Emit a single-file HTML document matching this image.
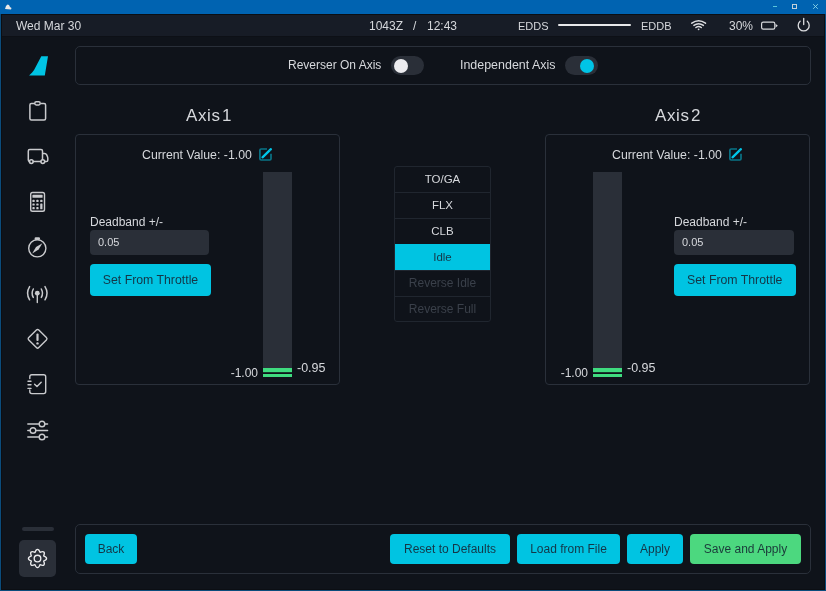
<!DOCTYPE html>
<html><head><meta charset="utf-8">
<style>
*{box-sizing:border-box;margin:0;padding:0}
html,body{width:826px;height:591px;overflow:hidden;background:#0b4c7c}
body{position:relative;font-family:"Liberation Sans",sans-serif;color:#d6d8dc;font-size:12px}
.a{position:absolute}
.t{position:absolute;white-space:pre;line-height:14px;will-change:transform}
#win{left:1px;top:14px;width:824px;height:576px;background:#0b0e13}
#status{left:2px;top:15px;width:822px;height:21px;background:#171c26;border-bottom:1px solid #0d1016;height:22px}
#body{left:2px;top:37px;width:822px;height:552px;background:#0f131a}
.panel{position:absolute;border:1.5px solid #2a303a;border-radius:5px}
.ap{border-radius:4px}
.btn{position:absolute;will-change:transform;background:#00c4e2;border-radius:4px;color:#143647;text-align:center;font-size:12px}
.ico{position:absolute;overflow:visible}
.row{position:absolute;will-change:transform;left:0;width:95px;height:26px;text-align:center;line-height:25px;border-top:1px solid #20262f;font-size:11.5px}
</style></head><body>
<!-- title bar -->
<div class="a" style="left:0;top:0;width:826px;height:14px;background:#0063b1"></div>
<svg class="a" style="left:4px;top:3px" width="8" height="7" viewBox="0 0 8 7"><path d="M1 6 L2 3 L3.5 1.5 L5 2 L6 4 L7.5 5 L7 6.5 Z" fill="#e8e8e8"/></svg>
<div class="a" style="left:773px;top:6px;width:4px;height:1px;background:#58c6dc"></div>
<div class="a" style="left:792px;top:4px;width:5px;height:5px;border:1px solid #c4d0d8"></div>
<svg class="a" style="left:812px;top:3px" width="7" height="7" viewBox="0 0 7 7"><path d="M1.2 1.2 L5.8 5.8 M5.8 1.2 L1.2 5.8" stroke="#8fd8e8" stroke-width="0.9"/></svg>

<div id="win" class="a"></div>
<div id="status" class="a"></div>
<div id="body" class="a"></div>

<!-- status bar -->
<div class="t" style="left:16px;top:19px">Wed Mar 30</div>
<div class="t" style="left:369px;top:19px">1043Z</div>
<div class="t" style="left:413px;top:19px">/</div>
<div class="t" style="left:427px;top:19px">12:43</div>
<div class="t" style="left:518px;top:19px;font-size:11px">EDDS</div>
<div class="a" style="left:558px;top:24px;width:73px;height:2px;background:#e8e8ea;border-radius:1px"></div>
<div class="t" style="left:641px;top:19px;font-size:11px">EDDB</div>
<svg class="a" style="left:0;top:0" width="826" height="591" viewBox="0 0 826 591">
 <g fill="none" stroke="#dcdde0" stroke-width="1.5" stroke-linecap="round">
  <path d="M691.8 23.2 Q698.6 18.2 705.5 23.2"/>
  <path d="M693.9 25.4 Q698.6 22 703.4 25.4"/>
  <path d="M695.9 27.5 Q698.6 25.6 701.3 27.5"/>
 </g>
 <circle cx="698.6" cy="29.3" r="0.9" fill="#dcdde0"/>
 <rect x="761.6" y="22.2" width="13.2" height="7" rx="1.6" fill="none" stroke="#d8d9dc" stroke-width="1.2"/>
 <path d="M775.6 23.8 L777.8 25.7 L775.6 27.6 Z" fill="#d8d9dc"/>
 <path d="M800.1 21.3 A5.5 5.5 0 1 0 807.3 21.3" fill="none" stroke="#dcdde0" stroke-width="1.3" stroke-linecap="round"/>
 <path d="M803.7 18.5 V24.6" stroke="#dcdde0" stroke-width="1.3" stroke-linecap="round"/>
</svg>
<div class="t" style="left:729px;top:19px">30%</div>



<!-- sidebar -->
<div class="a" style="left:22px;top:527px;width:32px;height:3.5px;border-radius:2px;background:#2a2f38"></div>
<div class="a" style="left:19px;top:540px;width:37px;height:37px;border-radius:5px;background:#2a2f38"></div>
<svg class="a" style="left:0;top:0" width="826" height="591" viewBox="0 0 826 591">
 <path d="M41.3 56.3 H48 L44.8 75.6 H29.1 C31.3 73.6 32.8 72 34.2 69.8 Z" fill="#00c4e4"/>
 <g fill="none" stroke="#c9cacd" stroke-width="1.5" stroke-linecap="round" stroke-linejoin="round">
  <!-- clipboard -->
  <path d="M34.3 103.5 H31.4 Q29.9 103.5 29.9 105 V118.5 Q29.9 120 31.4 120 H44.1 Q45.6 120 45.6 118.5 V105 Q45.6 103.5 44.1 103.5 H41.2"/>
  <rect x="34.8" y="101.8" width="5.4" height="3.2" rx="1.4"/>
  <!-- truck -->
  <path d="M29.6 161.6 Q28.3 161.4 28.3 160 V151 Q28.3 149.5 29.8 149.5 H41 Q42.5 149.5 42.5 151 V159.6 M42.5 153.4 H44.6 Q46 153.4 46.7 154.9 L47.5 156.8 Q47.8 157.6 47.8 158.6 V160.2 Q47.8 161.6 46.4 161.6 H44.8 M40.8 161.6 H33.3"/>
  <circle cx="31.3" cy="161.6" r="1.9"/>
  <circle cx="42.8" cy="161.6" r="1.9"/>
  <!-- calculator -->
  <rect x="30.7" y="192.5" width="13.8" height="18.8" rx="1.8" stroke-width="1.4"/>
  <!-- compass -->
  <circle cx="37.3" cy="248.3" r="8.6" stroke-width="1.4"/>
  <!-- broadcast -->
  <path d="M29.6 286.6 Q25.5 293.2 29.6 299.8 M45 286.6 Q49.1 293.2 45 299.8 M33.3 289 Q30.9 293.2 33.3 297.4 M41.3 289 Q43.7 293.2 41.3 297.4" stroke-width="1.5"/>
  <path d="M37.3 295 V302.6" stroke-width="1.4"/>
  <!-- diamond -->
  <path d="M36.4 330 Q37.6 328.8 38.8 330 L46.4 337.6 Q47.6 338.8 46.4 340 L38.8 347.6 Q37.6 348.8 36.4 347.6 L28.8 340 Q27.6 338.8 28.8 337.6 Z" stroke-width="1.4"/>
  <!-- journal -->
  <path d="M29.8 378.5 V376.8 Q29.8 374.8 31.8 374.8 H43.7 Q45.7 374.8 45.7 376.8 V391.6 Q45.7 393.6 43.7 393.6 H31.8 Q29.8 393.6 29.8 391.6 V390" stroke-width="1.4"/>
  <path d="M28 381.2 H31 M28 384.8 H31 M28 388.4 H31" stroke-width="1.4"/>
  <path d="M34.6 384.2 L37 386.6 L41.2 382.2" stroke-width="1.4"/>
  <!-- sliders -->
  <path d="M27.8 424 H39.2 M44.8 424 H47.6 M27.8 430.5 H30.2 M35.8 430.5 H47.6 M27.8 437 H39.2 M44.8 437 H47.6" stroke-width="1.4"/>
  <circle cx="42" cy="424" r="2.8" stroke-width="1.4"/>
  <circle cx="33" cy="430.5" r="2.8" stroke-width="1.4"/>
  <circle cx="42" cy="437" r="2.8" stroke-width="1.4"/>
 </g>
 <g fill="#c9cacd">
  <rect x="34.6" y="237.3" width="5.4" height="2.6" rx="1.2"/>
  <path d="M42.4 243.2 L38.6 249.6 L32.2 253.4 L36 247 Z"/>
  <circle cx="37.3" cy="293.2" r="2.4"/>
  <rect x="36.4" y="333.6" width="2.2" height="7.4" rx="1"/>
  <circle cx="37.5" cy="343.4" r="1.2"/>
  <rect x="32.4" y="194.8" width="10.2" height="3" rx="0.6"/>
  <rect x="32.4" y="199.8" width="2.3" height="2.2" rx="0.6"/>
  <rect x="36.3" y="199.8" width="2.3" height="2.2" rx="0.6"/>
  <rect x="40.2" y="199.8" width="2.3" height="2.2" rx="0.6"/>
  <rect x="32.4" y="203.4" width="2.3" height="2.2" rx="0.6"/>
  <rect x="36.3" y="203.4" width="2.3" height="2.2" rx="0.6"/>
  <rect x="40.2" y="203.4" width="2.3" height="5.9" rx="0.6"/>
  <rect x="32.4" y="207.1" width="2.3" height="2.2" rx="0.6"/>
  <rect x="36.3" y="207.1" width="2.3" height="2.2" rx="0.6"/>
 </g>
 <g fill="none" stroke="#ececee" stroke-width="1.35" stroke-linejoin="round">
  <path d="M34.97 552.40 C36.36 548.46 38.64 548.46 40.03 552.40 C43.79 550.60 45.40 552.21 43.60 555.97 C47.54 557.36 47.54 559.64 43.60 561.03 C45.40 564.79 43.79 566.40 40.03 564.60 C38.64 568.54 36.36 568.54 34.97 564.60 C31.21 566.40 29.60 564.79 31.40 561.03 C27.46 559.64 27.46 557.36 31.40 555.97 C29.60 552.21 31.21 550.60 34.97 552.40 Z"/>
  <circle cx="37.5" cy="558.5" r="3.3"/>
 </g>
</svg>

<!-- top toggle panel -->
<div class="panel" style="left:75px;top:46px;width:736px;height:39px"></div>
<div class="t" style="left:288px;top:58px">Reverser On Axis</div>
<div class="a" style="left:391px;top:56px;width:33px;height:19px;border-radius:10px;background:#2a2f38"></div>
<div class="a" style="left:394px;top:58.5px;width:14px;height:14px;border-radius:7px;background:#ececef"></div>
<div class="t" style="left:460px;top:58px;font-size:12.45px">Independent Axis</div>
<div class="a" style="left:565px;top:56px;width:33px;height:19px;border-radius:10px;background:#2a2f38"></div>
<div class="a" style="left:580px;top:58.5px;width:14px;height:14px;border-radius:7px;background:#00c4e6"></div>

<!-- axis titles -->
<div class="t" style="left:185.5px;top:106.5px;font-size:17px;line-height:18px;letter-spacing:0.6px">Axis</div>
<div class="t" style="left:222px;top:106.5px;font-size:17px;line-height:18px">1</div>
<div class="t" style="left:654.5px;top:106.5px;font-size:17px;line-height:18px;letter-spacing:0.6px">Axis</div>
<div class="t" style="left:691px;top:106.5px;font-size:17px;line-height:18px">2</div>

<!-- axis panels -->
<div class="panel ap" style="left:75px;top:134px;width:265px;height:250.5px"></div>
<div class="panel ap" style="left:545px;top:134px;width:265px;height:250.5px"></div>

<!-- axis 1 content -->
<div class="t" style="left:142px;top:148px;font-size:12.3px">Current Value: -1.00</div>
<svg class="a" style="left:258px;top:147px" width="16" height="16" viewBox="0 0 16 16">
 <path d="M9 2 H3.1 Q1.9 2 1.9 3.2 V11.8 Q1.9 13 3.1 13 H11.8 Q13 13 13 11.8 V6.8" fill="none" stroke="#0a7487" stroke-width="1.7"/>
 <path d="M4.5 10.3 L12.9 2.2" stroke="#00c6e8" stroke-width="2.3" stroke-linecap="round"/><path d="M11.9 3.3 L12.6 4" stroke="#0b3a48" stroke-width="0.5"/>
</svg>
<div class="a" style="left:263px;top:172px;width:29px;height:196px;background:#2a2f38"></div>
<div class="a" style="left:263px;top:368px;width:29px;height:3.7px;background:#3fdc7f"></div>
<div class="a" style="left:263px;top:371.7px;width:29px;height:1.8px;background:#173a2b"></div>
<div class="a" style="left:263px;top:373.5px;width:29px;height:3.5px;background:#3fdc7f"></div>
<div class="t" style="left:200px;top:366px;width:58px;text-align:right">-1.00</div>
<div class="t" style="left:297px;top:361px;font-size:12.5px">-0.95</div>
<div class="t" style="left:90px;top:215px">Deadband +/-</div>
<div class="a" style="left:90px;top:230px;width:119px;height:24.5px;border-radius:4px;background:#2a2f38"></div>
<div class="t" style="left:98px;top:235px;font-size:11px">0.05</div>
<div class="btn" style="left:90px;top:264px;width:121px;height:32px;line-height:32px;font-size:12.3px">Set From Throttle</div>

<!-- axis 2 content -->
<div class="t" style="left:612px;top:148px;font-size:12.3px">Current Value: -1.00</div>
<svg class="a" style="left:728px;top:147px" width="16" height="16" viewBox="0 0 16 16">
 <path d="M9 2 H3.1 Q1.9 2 1.9 3.2 V11.8 Q1.9 13 3.1 13 H11.8 Q13 13 13 11.8 V6.8" fill="none" stroke="#0a7487" stroke-width="1.7"/>
 <path d="M4.5 10.3 L12.9 2.2" stroke="#00c6e8" stroke-width="2.3" stroke-linecap="round"/><path d="M11.9 3.3 L12.6 4" stroke="#0b3a48" stroke-width="0.5"/>
</svg>
<div class="a" style="left:593px;top:172px;width:29px;height:196px;background:#2a2f38"></div>
<div class="a" style="left:593px;top:368px;width:29px;height:3.7px;background:#3fdc7f"></div>
<div class="a" style="left:593px;top:371.7px;width:29px;height:1.8px;background:#173a2b"></div>
<div class="a" style="left:593px;top:373.5px;width:29px;height:3.5px;background:#3fdc7f"></div>
<div class="t" style="left:530px;top:366px;width:58px;text-align:right">-1.00</div>
<div class="t" style="left:627px;top:361px;font-size:12.5px">-0.95</div>
<div class="t" style="left:674px;top:215px">Deadband +/-</div>
<div class="a" style="left:674px;top:230px;width:120px;height:24.5px;border-radius:4px;background:#2a2f38"></div>
<div class="t" style="left:682px;top:235px;font-size:11px">0.05</div>
<div class="btn" style="left:674px;top:264px;width:121.5px;height:32px;line-height:32px;font-size:12.3px">Set From Throttle</div>

<!-- middle list -->
<div class="a" style="left:394px;top:166px;width:97px;height:156px;border:1px solid #20262f;border-radius:3px;overflow:hidden">
 <div class="row" style="top:-1px;border-top:none;padding-top:1px">TO/GA</div>
 <div class="row" style="top:25px">FLX</div>
 <div class="row" style="top:51px">CLB</div>
 <div class="row" style="top:77px;background:#00c4e2;color:#143647;border-top-color:#00c4e2">Idle</div>
 <div class="row" style="top:103px;color:#3a404a;font-size:12px">Reverse Idle</div>
 <div class="row" style="top:129px;color:#3a404a;font-size:12px">Reverse Full</div>
</div>

<!-- bottom panel -->
<div class="panel" style="left:75px;top:524px;width:736px;height:50px"></div>
<div class="btn" style="left:85px;top:534px;width:52px;height:30px;line-height:30px">Back</div>
<div class="btn" style="left:390px;top:534px;width:120px;height:30px;line-height:30px">Reset to Defaults</div>
<div class="btn" style="left:517px;top:534px;width:103px;height:30px;line-height:30px">Load from File</div>
<div class="btn" style="left:627px;top:534px;width:56px;height:30px;line-height:30px">Apply</div>
<div class="btn" style="left:690px;top:534px;width:111px;height:30px;line-height:30px;background:#4cd87f;color:#1b3a3a">Save and Apply</div>

</body></html>
